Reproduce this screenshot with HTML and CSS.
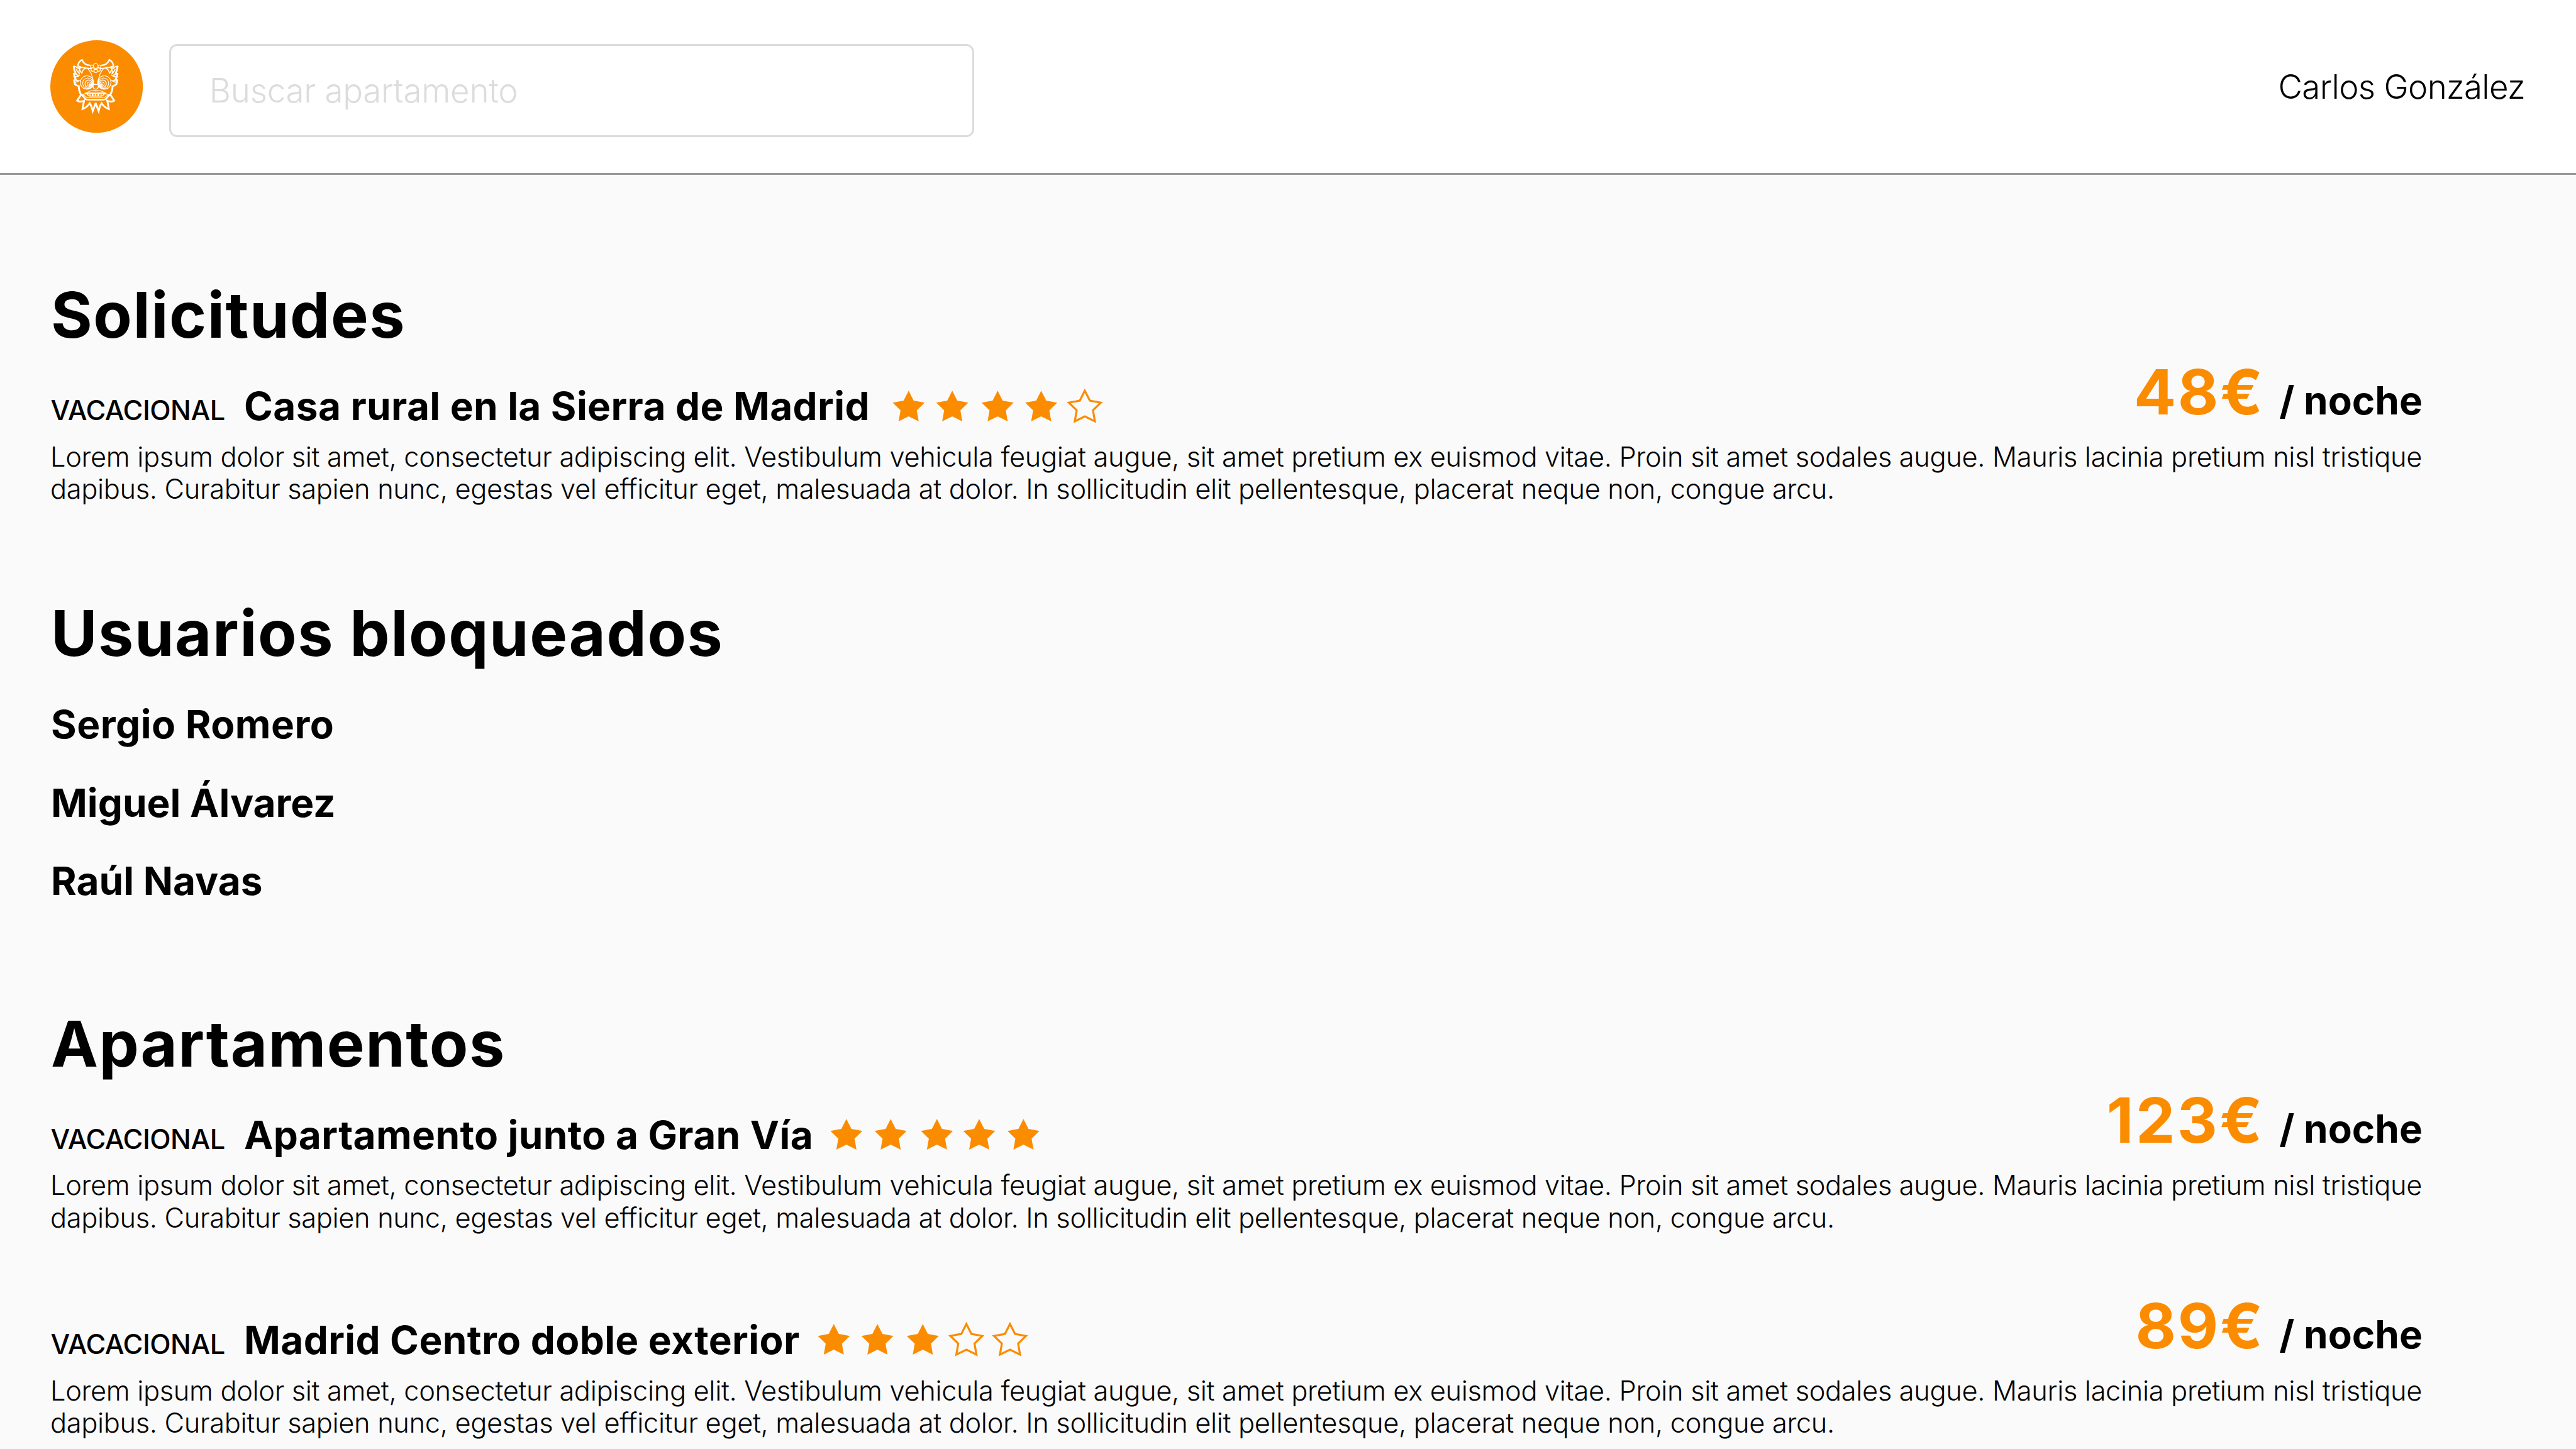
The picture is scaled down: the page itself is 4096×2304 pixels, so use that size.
FILE: index.html
```html
<!DOCTYPE html>
<html lang="es">
<head>
<meta charset="utf-8">
<title>Apartamentos</title>
<link rel="stylesheet" href="styles.css">
</head>
<body>
<svg class="defs" aria-hidden="true">
  <defs>
    <path id="star" d="M36 4 L46 23.7 L67.8 27.7 L52.2 43 L56 65 L36 55 L16 65 L19.9 43 L4.2 27.7 L26 23.7 Z"/>
  </defs>
</svg>
<header class="topbar">
  <svg class="logo" viewBox="-114 -90 552 552">
    <circle class="logo-disc" cx="162" cy="186" r="276"/>
    <g class="logo-face">
      <g id="half">
        <path class="w9" d="M50 66 Q52 38 75 27 Q88 58 124 60"/>
        <path class="w7" d="M48 62 Q74 74 100 76 L132 79 M24 64 Q38 64 52 78 Q62 68 98 74"/>
        <path class="w10" d="M26 64 Q27 88 37 108 L27 111 Q28 128 38 144 L28 149 L33 172 Q42 180 56 184 Q56 212 68 232 Q82 240 92 256 Q98 264 110 264 L157 264"/>
        <path class="w6" d="M66 74 Q54 88 58 108 Q46 98 40 82 M98 76 Q78 84 74 106 Q64 98 62 86 M34 108 Q46 120 58 120 Q46 129 36 126 M34 146 Q46 153 58 151 Q48 161 36 159"/>
        <path class="w4" d="M106 76 Q138 106 141 158 Q140 190 144 196"/>
        <circle class="w4" cx="105" cy="162" r="40"/>
        <circle class="w4" cx="110" cy="166" r="31"/>
        <circle class="w5" cx="115" cy="169" r="22"/>
        <circle class="w4" cx="119" cy="172" r="13"/>
        <circle class="solid" cx="122" cy="175" r="8"/>
        <path class="w4" d="M140 174 H157 M139 176 Q138 202 157 202"/>
        <path class="w4" d="M157 208 Q116 208 84 234 L70 236 M84 236 Q96 246 108 253 H157 M90 232 Q120 218 157 219"/>
        <path class="solid" d="M98 225 H158 V246 H118 Q104 240 98 225 Z"/>
        <path class="w10" d="M68 236 L46 270 Q62 281 87 271 L78 320 Q104 311 121 286 Q134 304 139 332 L157 284"/>
      </g>
      <use href="#half" transform="translate(313 0) scale(-1 1)"/>
      <path class="teeth" d="M110 230 H120 V240 Q113 238 110 230 Z M126 230 H134 V241 H126 Z M143 230 H151 V241 H143 Z M160 230 H168 V241 H160 Z M177 230 H186 V241 H177 Z M192 230 H203 Q200 238 192 240 Z"/>
      <g class="beads">
        <circle cx="134" cy="67" r="9"/><circle cx="179" cy="67" r="9"/>
        <circle cx="139" cy="85" r="10"/><circle cx="174" cy="85" r="10"/>
        <circle cx="156.500" cy="63" r="14"/><circle cx="156.500" cy="93" r="10"/>
      </g>
    </g>
  </svg>
  <input class="search" type="text" placeholder="Buscar apartamento">
  <span class="user">Carlos González</span>
</header>
<main class="content">
  <section class="requests">
    <h1 class="heading">Solicitudes</h1>
    <article class="card">
      <div class="card-head">
        <div class="card-title">
          <span class="tag">VACACIONAL</span>
          <h2 class="name">Casa rural en la Sierra de Madrid</h2>
          <svg class="stars stars-spaced" viewBox="0 0 424 72">
            <use href="#star"/><use href="#star" x="86.700"/><use href="#star" x="176.900"/><use href="#star" x="263.500"/><use class="empty" href="#star" x="350.200"/>
          </svg>
        </div>
        <div class="price"><strong class="amount">48€</strong><span class="unit">/ noche</span></div>
      </div>
      <p class="description">Lorem ipsum dolor sit amet, consectetur adipiscing elit. Vestibulum vehicula feugiat augue, sit amet pretium ex euismod vitae. Proin sit amet sodales augue. Mauris lacinia pretium nisl tristique<br>dapibus. Curabitur sapien nunc, egestas vel efficitur eget, malesuada at dolor. In sollicitudin elit pellentesque, placerat neque non, congue arcu.</p>
    </article>
  </section>
  <section class="blocked">
    <h1 class="heading">Usuarios bloqueados</h1>
    <ul class="people">
      <li>Sergio Romero</li>
      <li>Miguel Álvarez</li>
      <li>Raúl Navas</li>
    </ul>
  </section>
  <section class="apartments">
    <h1 class="heading">Apartamentos</h1>
    <article class="card">
      <div class="card-head">
        <div class="card-title">
          <span class="tag">VACACIONAL</span>
          <h2 class="name">Apartamento junto a Gran Vía</h2>
          <svg class="stars" viewBox="0 0 424 72">
            <use href="#star"/><use href="#star" x="88"/><use href="#star" x="180"/><use href="#star" x="264"/><use href="#star" x="352"/>
          </svg>
        </div>
        <div class="price"><strong class="amount amount-long">123€</strong><span class="unit">/ noche</span></div>
      </div>
      <p class="description">Lorem ipsum dolor sit amet, consectetur adipiscing elit. Vestibulum vehicula feugiat augue, sit amet pretium ex euismod vitae. Proin sit amet sodales augue. Mauris lacinia pretium nisl tristique<br>dapibus. Curabitur sapien nunc, egestas vel efficitur eget, malesuada at dolor. In sollicitudin elit pellentesque, placerat neque non, congue arcu.</p>
    </article>
    <article class="card">
      <div class="card-head">
        <div class="card-title">
          <span class="tag">VACACIONAL</span>
          <h2 class="name">Madrid Centro doble exterior</h2>
          <svg class="stars stars-nudged" viewBox="0 0 424 72">
            <use href="#star"/><use href="#star" x="86.700"/><use href="#star" x="176.900"/><use class="empty" href="#star" x="263.500"/><use class="empty" href="#star" x="350.200"/>
          </svg>
        </div>
        <div class="price"><strong class="amount">89€</strong><span class="unit">/ noche</span></div>
      </div>
      <p class="description">Lorem ipsum dolor sit amet, consectetur adipiscing elit. Vestibulum vehicula feugiat augue, sit amet pretium ex euismod vitae. Proin sit amet sodales augue. Mauris lacinia pretium nisl tristique<br>dapibus. Curabitur sapien nunc, egestas vel efficitur eget, malesuada at dolor. In sollicitudin elit pellentesque, placerat neque non, congue arcu.</p>
    </article>
  </section>
</main>
</body>
</html>
```
FILE: styles.css
```css
* { box-sizing: border-box; margin: 0; padding: 0; }

body {
  background: #fafafa;
  color: #000;
  font-family: Inter, "Liberation Sans", sans-serif;
}

.defs { display: none; }

/* Top bar */
.topbar {
  display: flex;
  align-items: flex-start;
  height: 278.4px;
  padding: 64px 80px 0;
  background: #fff;
  border-bottom: 3px solid #979797;
}

.logo { width: 147.2px; height: 147.2px; flex: none; }
.logo-disc { fill: #fb8c00; }
.logo-face { fill: none; stroke: #fff; }
.w10 { stroke-width: 11; }
.w9 { stroke-width: 9; }
.w7 { stroke-width: 7; }
.w6 { stroke-width: 6.5; }
.w5 { stroke-width: 5; }
.w4 { stroke-width: 4.2; }
.solid { fill: #fff; stroke: none; }
.teeth { fill: #fb8c00; stroke: none; }
.beads { fill: #fb8c00; stroke-width: 4.5; }

.search {
  width: 1280px;
  height: 147.2px;
  margin: 6.4px 0 0 41.6px;
  padding: 0 61px;
  border: 3px solid #dcdcdc;
  border-radius: 12.8px;
  background: #fff;
  font: 300 52.8px Inter, "Liberation Sans", sans-serif;
  letter-spacing: -0.25px;
}
.search::placeholder { color: #dcdcdc; opacity: 1; }

.user {
  margin: 41.6px 1px 0 auto;
  font-size: 52.8px;
  font-weight: 300;
  line-height: 64px;
  letter-spacing: -0.69px;
}

/* Sections */
.content { padding: 163.1px 244px 0 80px; }

.heading {
  padding-left: 1px;
  font-size: 100.5px;
  font-weight: 700;
  line-height: 120px;
  letter-spacing: 1.55px;
}

.blocked { margin-top: 143.7px; }
.apartments { margin-top: 160.5px; }

.people {
  display: flex;
  flex-direction: column;
  gap: 48.8px;
  margin-top: 46.7px;
  padding-left: 1px;
  list-style: none;
  font-size: 62.1px;
  font-weight: 700;
  line-height: 76px;
}
.people li:first-child { letter-spacing: 0.5px; }

/* Listing cards */
.card { margin-top: 1.6px; }
.card + .card { margin-top: 86.1px; }

.card-head {
  display: flex;
  justify-content: space-between;
  align-items: flex-start;
  height: 121px;
}

.card-title {
  display: flex;
  align-items: baseline;
  padding-top: 45.1px;
}

.tag {
  width: 308px;
  padding-left: 0.5px;
  font-size: 43.4px;
  font-weight: 480;
  letter-spacing: -0.45px;
}

.name {
  margin-right: 23.5px;
  font-size: 62.1px;
  font-weight: 700;
  line-height: 76px;
  letter-spacing: 0.38px;
}

.stars {
  align-self: flex-start;
  width: 339.2px;
  height: 57.6px;
  margin-top: 9.4px;
  fill: #fb8c00;
}
.stars-spaced { margin-left: 9.5px; }
.stars-nudged { margin-left: 2px; }
.stars .empty { fill: none; stroke: #fb8c00; stroke-width: 4; }

.price {
  display: flex;
  align-items: baseline;
  gap: 23.8px;
  line-height: 120px;
}

.amount {
  color: #fb8c00;
  font-size: 99.3px;
  font-weight: 700;
  letter-spacing: 2.6px;
}
.amount-long { letter-spacing: 3.3px; }

.unit { font-size: 62.1px; font-weight: 700; }

.description {
  margin-top: 16.9px;
  font-size: 43.4px;
  font-weight: 300;
  line-height: 51.2px;
  letter-spacing: -0.348px;
  white-space: nowrap;
}
```
